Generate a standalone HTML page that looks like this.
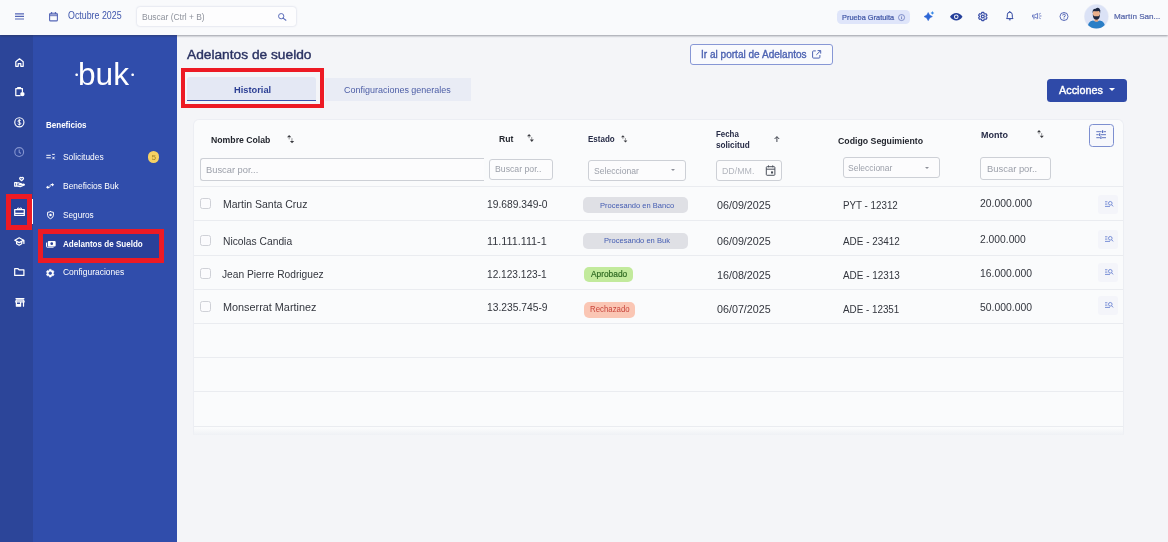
<!DOCTYPE html>
<html lang="es">
<head>
<meta charset="utf-8">
<title>Adelantos de sueldo</title>
<style>
*{box-sizing:border-box;margin:0;padding:0}
html,body{width:1168px;height:542px;overflow:hidden}
body{position:relative;background:#f4f5f8;font-family:"Liberation Sans","DejaVu Sans",sans-serif}
#app{position:absolute;left:0;top:0;width:1168px;height:542px;overflow:hidden;will-change:transform}
.a{position:absolute}
.t{position:absolute;white-space:nowrap;line-height:1;transform-origin:0 0}
.red{position:absolute;border:5px solid #ed1a24}
svg{position:absolute;overflow:visible}
</style>
</head>
<body>
<div id="app">
<div class="t" style="left:187.40px;top:48px;font-size:13.40px;color:#2a3262;transform:scaleX(1.0256);-webkit-text-stroke:.4px #2a3262">Adelantos de sueldo</div>
<div class="a" style="left:187.00px;top:77.30px;width:129.00px;height:23.40px;background:#e4e8f4;border-radius:3px 3px 0 0"></div>
<div class="a" style="left:187.00px;top:99.50px;width:129.00px;height:1.20px;background:#3a53ab"></div>
<div class="t" style="left:234.00px;top:85px;font-size:9.60px;font-weight:bold;color:#2c3f94;transform:scaleX(0.9677);">Historial</div>
<div class="a" style="left:324.70px;top:78.00px;width:146.00px;height:22.70px;background:#e9ecf5"></div>
<div class="t" style="left:343.60px;top:85px;font-size:9.60px;color:#4d5ea6;transform:scaleX(0.9358);">Configuraciones generales</div>
<div class="red" style="left:181px;top:68.300px;width:143px;height:39.400px;border-width:4.700px"></div>
<div class="a" style="left:690.20px;top:44.30px;width:142.80px;height:20.40px;border:1px solid #8797d5;border-radius:3px;background:#f9fafd"></div>
<div class="t" style="left:700.80px;top:50px;font-size:10.00px;color:#4d63b2;transform:scaleX(1.0055);-webkit-text-stroke:.35px #4d63b2">Ir al portal de Adelantos</div>
<svg style="left:811.60px;top:50.30px" width="9.30" height="8.70" viewBox="0 0 9.300 8.700" ><path d="M3.800 .9H1.500Q.6 .9 .6 1.800V7.200Q.6 8.100 1.500 8.100H7Q7.900 8.100 7.900 7.200V5" fill="none" stroke="#4d63b2" stroke-width="1"/><path d="M5.600 .6H8.700V3.600M8.500 .8L4.300 4.900" fill="none" stroke="#4d63b2" stroke-width="1"/></svg>
<div class="a" style="left:1046.60px;top:78.80px;width:80.20px;height:22.90px;background:#2f4aa8;border-radius:3.500px"></div>
<div class="t" style="left:1058.60px;top:85px;font-size:11.00px;color:#fff;transform:scaleX(0.9837);-webkit-text-stroke:.4px #fff">Acciones</div>
<div class="a" style="left:1109.30px;top:88.20px;width:0;height:0;border-left:3.10px solid transparent;border-right:3.10px solid transparent;border-top:3.40px solid #fff"></div>
<div class="a" style="left:193.30px;top:118.60px;width:931.20px;height:316.40px;background:#fafbfc;border:1px solid #eceef3;border-bottom:none;border-radius:6px 6px 0 0"></div>
<div class="a" style="left:193.30px;top:428.00px;width:931.20px;height:7.00px;background:linear-gradient(rgba(240,242,246,0),#eff1f5)"></div>
<div class="t" style="left:210.70px;top:136px;font-size:9.20px;font-weight:bold;color:#23262e;transform:scaleX(0.9466);">Nombre Colab</div>
<svg style="left:287.10px;top:135.10px" width="7.20" height="8.30" viewBox="0 0 7.2 8.3" ><path d="M0 2.300L2.150 0L4.300 2.300Z" fill="#3a3b40"/><path d="M2.150 2.200V4.400M4.950 3.200V6" stroke="#3a3b40" stroke-width=".9" opacity=".6"/><path d="M2.900 5.900H7.200L5.050 8.300Z" fill="#3a3b40"/></svg>
<div class="t" style="left:498.60px;top:135px;font-size:9.20px;font-weight:bold;color:#23262e;transform:scaleX(0.9379);">Rut</div>
<svg style="left:527.10px;top:133.70px" width="6.90" height="7.90" viewBox="0 0 7.2 8.3" ><path d="M0 2.300L2.150 0L4.300 2.300Z" fill="#3a3b40"/><path d="M2.150 2.200V4.400M4.950 3.200V6" stroke="#3a3b40" stroke-width=".9" opacity=".6"/><path d="M2.900 5.900H7.200L5.050 8.300Z" fill="#3a3b40"/></svg>
<div class="t" style="left:588.20px;top:135px;font-size:9.00px;font-weight:bold;color:#272c47;transform:scaleX(0.8883);">Estado</div>
<svg style="left:620.60px;top:134.50px" width="6.40" height="7.70" viewBox="0 0 7.2 8.3" ><path d="M0 2.300L2.150 0L4.300 2.300Z" fill="#3a3b40"/><path d="M2.150 2.200V4.400M4.950 3.200V6" stroke="#3a3b40" stroke-width=".9" opacity=".6"/><path d="M2.900 5.900H7.200L5.050 8.300Z" fill="#3a3b40"/></svg>
<div class="t" style="left:716.00px;top:130px;font-size:8.60px;font-weight:bold;color:#272c47;transform:scaleX(0.9179);">Fecha</div>
<div class="t" style="left:716.00px;top:141px;font-size:8.60px;font-weight:bold;color:#272c47;transform:scaleX(0.9520);">solicitud</div>
<svg style="left:773.90px;top:135.50px" width="5.80" height="6.20" viewBox="0 0 5.800 6.200" ><path d="M2.900 6V.8M.6 3L2.900 .6L5.200 3" stroke="#2b2f3a" stroke-width=".9" fill="none"/></svg>
<div class="t" style="left:838.00px;top:136px;font-size:9.40px;font-weight:bold;color:#23262e;transform:scaleX(0.9331);">Codigo Seguimiento</div>
<div class="t" style="left:980.80px;top:131px;font-size:9.20px;font-weight:bold;color:#272c47;transform:scaleX(0.9772);">Monto</div>
<svg style="left:1036.90px;top:129.80px" width="6.80" height="8.00" viewBox="0 0 7.2 8.3" ><path d="M0 2.300L2.150 0L4.300 2.300Z" fill="#3a3b40"/><path d="M2.150 2.200V4.400M4.950 3.200V6" stroke="#3a3b40" stroke-width=".9" opacity=".6"/><path d="M2.900 5.900H7.200L5.050 8.300Z" fill="#3a3b40"/></svg>
<div class="a" style="left:1089.20px;top:124.20px;width:24.50px;height:22.40px;border:1px solid #7d8fd0;border-radius:3.500px;background:#f7f8fc"></div>
<svg style="left:1096.40px;top:130.30px" width="10.30" height="9.40" viewBox="0 0 10.300 9.400" ><path d="M.3 1.700H5.600M7.600 1.700H10M.3 4.700H2.700M4.700 4.700H10M.3 7.700H3.900M5.900 7.700H10" stroke="#4f67ba" stroke-width=".9"/><path d="M6.600 .3V3.100M3.700 3.300V6.100M4.900 6.300V9.100" stroke="#4f67ba" stroke-width="1.100"/></svg>
<div class="a" style="left:199.90px;top:158.00px;width:284.10px;height:22.70px;border:1px solid #cdd0d6;border-radius:3px;background:#fcfcfd;border-right:none;border-radius:3px 0 0 3px"></div>
<div class="t" style="left:205.80px;top:165px;font-size:9.80px;color:#9b9fa9;transform:scaleX(0.9507);">Buscar por...</div>
<div class="a" style="left:488.70px;top:159.20px;width:64.10px;height:20.50px;border:1px solid #cdd0d6;border-radius:3px;background:#fcfcfd"></div>
<div class="t" style="left:494.60px;top:165px;font-size:9.30px;color:#9b9fa9;transform:scaleX(0.9363);">Buscar por..</div>
<div class="a" style="left:588.20px;top:159.80px;width:97.50px;height:20.90px;border:1px solid #cdd0d6;border-radius:3px;background:#fcfcfd"></div>
<div class="t" style="left:593.70px;top:167px;font-size:9.30px;color:#9b9fa9;transform:scaleX(0.9220);">Seleccionar</div>
<div class="a" style="left:671.30px;top:169.10px;width:0;height:0;border-left:2.70px solid transparent;border-right:2.70px solid transparent;border-top:2.60px solid #8d9099"></div>
<div class="a" style="left:716.00px;top:160.20px;width:65.80px;height:20.90px;border:1px solid #cdd0d6;border-radius:3px;background:#fcfcfd"></div>
<div class="t" style="left:721.60px;top:167px;font-size:9.30px;color:#b2b5bd;transform:scaleX(0.9493);">DD/MM.</div>
<svg style="left:765.20px;top:165.10px" width="11.20" height="11.10" viewBox="0 0 11.200 11.100" ><rect x="1.300" y="1.700" width="8.600" height="8.600" rx=".8" fill="none" stroke="#4a4f5a" stroke-width="1"/><path d="M1.300 4.200H9.900M3.500 .4V2.300M7.700 .4V2.300" stroke="#4a4f5a" stroke-width="1"/><rect x="6" y="6.400" width="2.100" height="2.100" fill="#4a4f5a"/></svg>
<div class="a" style="left:842.50px;top:157.30px;width:97.30px;height:20.70px;border:1px solid #cdd0d6;border-radius:3px;background:#fcfcfd"></div>
<div class="t" style="left:847.60px;top:164px;font-size:9.30px;color:#9b9fa9;transform:scaleX(0.9138);">Seleccionar</div>
<div class="a" style="left:925.20px;top:166.80px;width:0;height:0;border-left:2.30px solid transparent;border-right:2.30px solid transparent;border-top:2.40px solid #8d9099"></div>
<div class="a" style="left:980.10px;top:156.90px;width:70.70px;height:22.80px;border:1px solid #cdd0d6;border-radius:3px;background:#fcfcfd"></div>
<div class="t" style="left:986.70px;top:164px;font-size:9.80px;color:#9b9fa9;transform:scaleX(0.9602);">Buscar por..</div>
<div class="a" style="left:194.30px;top:186.00px;width:929.20px;height:1.10px;background:#eaecf0"></div>
<div class="a" style="left:194.30px;top:219.60px;width:929.20px;height:1.10px;background:#eaecf0"></div>
<div class="a" style="left:194.30px;top:254.70px;width:929.20px;height:1.10px;background:#eaecf0"></div>
<div class="a" style="left:194.30px;top:288.80px;width:929.20px;height:1.10px;background:#eaecf0"></div>
<div class="a" style="left:194.30px;top:322.70px;width:929.20px;height:1.10px;background:#eaecf0"></div>
<div class="a" style="left:194.30px;top:357.10px;width:929.20px;height:1.10px;background:#eaecf0"></div>
<div class="a" style="left:194.30px;top:391.40px;width:929.20px;height:1.10px;background:#eaecf0"></div>
<div class="a" style="left:194.30px;top:425.50px;width:929.20px;height:1.10px;background:#eaecf0"></div>
<div class="a" style="left:200.20px;top:198.00px;width:10.90px;height:10.80px;border:1px solid #cfd1d7;border-radius:2.500px;background:#fbfbfd"></div>
<div class="t" style="left:222.80px;top:199px;font-size:11.40px;color:#33363e;transform:scaleX(0.9197);">Martin Santa Cruz</div>
<div class="t" style="left:487.30px;top:199px;font-size:11.40px;color:#33363e;transform:scaleX(0.9012);">19.689.349-0</div>
<div class="t" style="left:716.80px;top:200px;font-size:11.40px;color:#33363e;transform:scaleX(0.9422);">06/09/2025</div>
<div class="t" style="left:842.80px;top:200px;font-size:11.40px;color:#33363e;transform:scaleX(0.8599);">PYT - 12312</div>
<div class="t" style="left:979.50px;top:198px;font-size:11.40px;color:#33363e;transform:scaleX(0.9122);">20.000.000</div>
<div class="a" style="left:1098.30px;top:194.90px;width:19.40px;height:19.20px;background:#f4f5fa;border-radius:3px"></div><svg style="left:1105.00px;top:201.30px" width="8.40" height="6.40" viewBox="0 0 8.400 6.400" ><path d="M0 .8H2.400M0 3.100H2.400M0 5.400H5" stroke="#6c84d2" stroke-width=".9"/><circle cx="5.300" cy="2.300" r="1.800" fill="none" stroke="#6c84d2" stroke-width=".9"/><path d="M6.600 3.700L8.100 5.400" stroke="#6c84d2" stroke-width=".95"/></svg>
<div class="a" style="left:200.20px;top:235.00px;width:10.90px;height:10.80px;border:1px solid #cfd1d7;border-radius:2.500px;background:#fbfbfd"></div>
<div class="t" style="left:222.80px;top:236px;font-size:11.40px;color:#33363e;transform:scaleX(0.9020);">Nicolas Candia</div>
<div class="t" style="left:487.30px;top:236px;font-size:11.40px;color:#33363e;transform:scaleX(0.9493);">11.111.111-1</div>
<div class="t" style="left:716.80px;top:236px;font-size:11.40px;color:#33363e;transform:scaleX(0.9422);">06/09/2025</div>
<div class="t" style="left:842.80px;top:236px;font-size:11.40px;color:#33363e;transform:scaleX(0.8708);">ADE - 23412</div>
<div class="t" style="left:979.50px;top:234px;font-size:11.40px;color:#33363e;transform:scaleX(0.9039);">2.000.000</div>
<div class="a" style="left:1098.30px;top:229.70px;width:19.40px;height:19.20px;background:#f4f5fa;border-radius:3px"></div><svg style="left:1105.00px;top:236.10px" width="8.40" height="6.40" viewBox="0 0 8.400 6.400" ><path d="M0 .8H2.400M0 3.100H2.400M0 5.400H5" stroke="#6c84d2" stroke-width=".9"/><circle cx="5.300" cy="2.300" r="1.800" fill="none" stroke="#6c84d2" stroke-width=".9"/><path d="M6.600 3.700L8.100 5.400" stroke="#6c84d2" stroke-width=".95"/></svg>
<div class="a" style="left:200.20px;top:268.00px;width:10.90px;height:10.80px;border:1px solid #cfd1d7;border-radius:2.500px;background:#fbfbfd"></div>
<div class="t" style="left:222.30px;top:269px;font-size:11.40px;color:#33363e;transform:scaleX(0.8976);">Jean Pierre Rodriguez</div>
<div class="t" style="left:487.30px;top:269px;font-size:11.40px;color:#33363e;transform:scaleX(0.8892);">12.123.123-1</div>
<div class="t" style="left:716.80px;top:270px;font-size:11.40px;color:#33363e;transform:scaleX(0.9422);">16/08/2025</div>
<div class="t" style="left:842.80px;top:270px;font-size:11.40px;color:#33363e;transform:scaleX(0.8708);">ADE - 12313</div>
<div class="t" style="left:979.50px;top:268px;font-size:11.40px;color:#33363e;transform:scaleX(0.9122);">16.000.000</div>
<div class="a" style="left:1098.30px;top:262.70px;width:19.40px;height:19.20px;background:#f4f5fa;border-radius:3px"></div><svg style="left:1105.00px;top:269.10px" width="8.40" height="6.40" viewBox="0 0 8.400 6.400" ><path d="M0 .8H2.400M0 3.100H2.400M0 5.400H5" stroke="#6c84d2" stroke-width=".9"/><circle cx="5.300" cy="2.300" r="1.800" fill="none" stroke="#6c84d2" stroke-width=".9"/><path d="M6.600 3.700L8.100 5.400" stroke="#6c84d2" stroke-width=".95"/></svg>
<div class="a" style="left:200.20px;top:301.00px;width:10.90px;height:10.80px;border:1px solid #cfd1d7;border-radius:2.500px;background:#fbfbfd"></div>
<div class="t" style="left:222.80px;top:302px;font-size:11.40px;color:#33363e;transform:scaleX(0.9520);">Monserrat Martinez</div>
<div class="t" style="left:487.30px;top:302px;font-size:11.40px;color:#33363e;transform:scaleX(0.9012);">13.235.745-9</div>
<div class="t" style="left:716.80px;top:304px;font-size:11.40px;color:#33363e;transform:scaleX(0.9422);">06/07/2025</div>
<div class="t" style="left:842.80px;top:304px;font-size:11.40px;color:#33363e;transform:scaleX(0.8631);">ADE - 12351</div>
<div class="t" style="left:979.50px;top:302px;font-size:11.40px;color:#33363e;transform:scaleX(0.9122);">50.000.000</div>
<div class="a" style="left:1098.30px;top:295.70px;width:19.40px;height:19.20px;background:#f4f5fa;border-radius:3px"></div><svg style="left:1105.00px;top:302.10px" width="8.40" height="6.40" viewBox="0 0 8.400 6.400" ><path d="M0 .8H2.400M0 3.100H2.400M0 5.400H5" stroke="#6c84d2" stroke-width=".9"/><circle cx="5.300" cy="2.300" r="1.800" fill="none" stroke="#6c84d2" stroke-width=".9"/><path d="M6.600 3.700L8.100 5.400" stroke="#6c84d2" stroke-width=".95"/></svg>
<div class="a" style="left:583.10px;top:197.10px;width:105.10px;height:15.50px;background:#dfe0e5;border-radius:5px"></div>
<div class="t" style="left:599.60px;top:202px;font-size:7.60px;color:#425bb2;transform:scaleX(0.9919);">Procesando en Banco</div>
<div class="a" style="left:583.10px;top:233.00px;width:105.10px;height:15.50px;background:#dfe0e5;border-radius:5px"></div>
<div class="t" style="left:603.50px;top:237px;font-size:7.60px;color:#425bb2;transform:scaleX(0.9943);">Procesando en Buk</div>
<div class="a" style="left:584.10px;top:266.60px;width:49.10px;height:15.40px;background:#c2ea9c;border-radius:5px"></div>
<div class="t" style="left:590.60px;top:270px;font-size:8.60px;color:#2f6a22;transform:scaleX(0.9709);-webkit-text-stroke:.2px #2f6a22">Aprobado</div>
<div class="a" style="left:583.60px;top:302.20px;width:51.60px;height:15.50px;background:#fac6b4;border-radius:5px"></div>
<div class="t" style="left:589.50px;top:306px;font-size:8.20px;color:#c9463c;transform:scaleX(0.9578);">Rechazado</div>
<div class="a" style="left:0.00px;top:34.00px;width:32.50px;height:508.00px;background:#2c4599"></div>
<div class="a" style="left:32.50px;top:34.00px;width:144.80px;height:508.00px;background:#304dab"></div>
<div class="a" style="left:11.00px;top:198.80px;width:16.20px;height:25.80px;background:#293f97"></div>
<div class="a" style="left:43.00px;top:234.00px;width:116.20px;height:24.00px;background:#2a4199"></div>
<div class="a" style="left:32.10px;top:199.30px;width:0.90px;height:24.70px;background:#fff"></div>
<svg style="left:15.00px;top:57.80px" width="9.00" height="9.00" viewBox="0 0 9 9" ><path d="M.8 8.300V3.700L4.500 .8L8.200 3.700V8.300H5.800V5.500H3.200V8.300Z" stroke="#fff" fill="none" stroke-width="1.25" stroke-linejoin="round" stroke-linecap="round"/></svg><svg style="left:15.00px;top:87.00px" width="10.00" height="9.70" viewBox="0 0 10 9.700" ><path d="M5.200 8.600H.8V1.600H7.400V4.500M2.700 1.600V.6H5.500V1.600" stroke="#fff" fill="none" stroke-width="1.25" stroke-linejoin="round" stroke-linecap="round"/><circle cx="7.400" cy="7.100" r="2.200" fill="#fff"/></svg><svg style="left:14.20px;top:116.70px" width="10.70" height="10.70" viewBox="0 0 10.700 10.700" ><circle cx="5.350" cy="5.350" r="4.600" fill="none" stroke="#fff" stroke-width="1.15"/><path d="M6.800 3.900Q6.400 3.100 5.300 3.100Q4 3.200 4 4.200Q4 5 5.350 5.350Q6.800 5.700 6.800 6.600Q6.700 7.600 5.350 7.600Q4.200 7.600 3.800 6.700M5.350 2.200V8.500" fill="none" stroke="#fff" stroke-width=".95"/></svg><svg style="left:14.20px;top:147.20px" width="10.40" height="10.10" viewBox="0 0 10.400 10.100" ><circle cx="5.200" cy="5.050" r="4.400" fill="none" stroke="#8494cf" stroke-width="1.1"/><path d="M5.200 2.500V5.200L6.900 6.500" fill="none" stroke="#8494cf" stroke-width="1.1"/></svg><svg style="left:13.80px;top:177.10px" width="11.10" height="10.40" viewBox="0 0 11.100 10.400" ><path d="M7.600 3.700L5.700 1.900A1.150 1.150 0 0 1 7.600 .8A1.150 1.150 0 0 1 9.500 1.900Z" stroke="#fff" fill="none" stroke-width="1.25" stroke-linejoin="round" stroke-linecap="round"/><path d="M.7 5.600H2.700V9.200H.7ZM2.700 6H5L7.300 6.800Q7.600 7.600 6.700 7.700H5M6.900 7.700L9.600 7.200Q10.500 7.300 10.300 8L6.300 9.600L2.700 8.800" stroke="#fff" fill="none" stroke-width="1.25" stroke-linejoin="round" stroke-linecap="round"/></svg><svg style="left:13.90px;top:207.10px" width="11.00" height="9.20" viewBox="0 0 11 9.200" ><path d="M.7 2.600H10.300V8.500H.7ZM1 6.300H10" stroke="#fff" fill="none" stroke-width="1.25" stroke-linejoin="round" stroke-linecap="round"/><path d="M3.500 2.400Q3.300 .5 4.600 .9L5.500 2.200L6.400 .9Q7.700 .5 7.500 2.400" stroke="#fff" fill="none" stroke-width="1"/></svg><svg style="left:14.20px;top:237.30px" width="10.90" height="8.90" viewBox="0 0 10.900 8.900" ><path d="M.8 3.200L5.200 .8L9.600 3.200L5.200 5.600ZM2.600 4.500V6.800L5.200 8.200L7.800 6.800V4.500M9.900 3.300V6.400" stroke="#fff" fill="none" stroke-width="1.25" stroke-linejoin="round" stroke-linecap="round"/></svg><svg style="left:14.20px;top:268.20px" width="10.60" height="8.10" viewBox="0 0 10.600 8.100" ><path d="M.7 .7H4L5.100 1.800H9.900V7.400H.7Z" stroke="#fff" fill="none" stroke-width="1.25" stroke-linejoin="round" stroke-linecap="round"/></svg><svg style="left:14.50px;top:297.50px" width="9.90" height="8.90" viewBox="0 0 9.900 8.900" ><path d="M1 .7H8.900M.7 3.900L1.300 2.100H8.600L9.200 3.900ZM1.400 4V8.200H5.600V4M8.500 4V8.200" stroke="#fff" fill="none" stroke-width="1.25" stroke-linejoin="round" stroke-linecap="round"/><path d="M1.400 6H5.600V8.200H1.400Z" fill="#fff"/></svg>
<div class="t" style="left:78.41px;top:59px;font-size:31.70px;color:#fff;transform:scaleX(0.9970);">buk</div>
<div class="t" style="left:74.50px;top:71px;font-size:9.00px;color:#fff;transform:scaleX(1.0667);">•</div>
<div class="t" style="left:131.30px;top:71px;font-size:9.00px;color:#fff;transform:scaleX(1.0667);">•</div>
<div class="t" style="left:45.50px;top:121px;font-size:9.20px;font-weight:bold;color:#fff;transform:scaleX(0.8716);">Beneficios</div>
<svg style="left:45.50px;top:154.40px" width="9.00" height="5.60" viewBox="0 0 9 5.600" ><path d="M.3 1.300H4.800M.3 3.800H4.800" stroke="#fff" stroke-width="1"/><path d="M6.200 .4H8.800M6.300 2.700L8.600 5.300M8.600 2.700L6.300 5.300" stroke="#fff" stroke-width=".95"/></svg><svg style="left:46.00px;top:183.00px" width="8.20" height="6.00" viewBox="0 0 8.200 6" ><path d="M0 4.300L2.200 2.500V3.700H3.600V4.900H2.200V6.100Z" fill="#fff"/><path d="M8.200 1.700L6 -.1V1.100H4.600V2.300H6V3.500Z" fill="#fff"/><circle cx="4.100" cy="3" r=".7" fill="#fff"/></svg><svg style="left:46.70px;top:211.00px" width="7.00" height="8.30" viewBox="0 0 7 8.300" ><path d="M3.500 .6Q5 1.300 6.400 1.300V4.300Q6.300 6.700 3.500 7.700Q.7 6.700 .6 4.300V1.300Q2 1.300 3.500 .6Z" stroke="#fff" fill="none" stroke-width="1" stroke-linejoin="round" stroke-linecap="round"/><circle cx="3.500" cy="3.900" r="1.250" fill="#fff"/></svg><svg style="left:45.50px;top:241.20px" width="9.70" height="6.60" viewBox="0 0 9.700 6.600" ><rect x="1.800" y="0" width="7.900" height="5.400" rx="1" fill="#fff"/><path d="M.5 1.600V5.600Q.5 6.200 1.100 6.200H7.600" stroke="#fff" stroke-width="1" fill="none"/><circle cx="5.750" cy="2.700" r="1.350" fill="#2a4199"/></svg><svg style="left:45.80px;top:268.80px" width="8.50" height="8.40" viewBox="1 1 22 22" preserveAspectRatio="none"><path d="M19.430 12.980c.04-.32.070-.64.070-.98s-.03-.66-.07-.98l2.110-1.650c.19-.15.240-.42.120-.64l-2-3.460c-.12-.22-.39-.3-.61-.22l-2.490 1c-.52-.4-1.080-.73-1.690-.98l-.38-2.650C14.460 2.180 14.250 2 14 2h-4c-.25 0-.46.180-.49.420l-.38 2.650c-.61.250-1.170.59-1.690.98l-2.490-1c-.23-.09-.49 0-.61.220l-2 3.460c-.13.220-.07.490.12.640l2.110 1.650c-.4.320-.7.650-.7.980s.3.660.7.980l-2.110 1.650c-.19.150-.24.420-.12.640l2 3.460c.12.220.39.300.61.220l2.490-1c.52.400 1.080.73 1.690.98l.38 2.650c.3.240.24.420.49.420h4c.25 0 .46-.18.490-.42l.38-2.650c.61-.25 1.170-.59 1.690-.98l2.490 1c.23.090.49 0 .61-.22l2-3.460c.12-.22.070-.49-.12-.64l-2.110-1.650z" fill="#fff" stroke="#fff" stroke-width="1.76" stroke-linejoin="round"/><circle cx="12" cy="12" r="3.400" fill="#304dab" stroke="#304dab" stroke-width="1.76"/></svg>
<div class="t" style="left:62.70px;top:153px;font-size:9.30px;color:#fff;transform:scaleX(0.9049);">Solicitudes</div>
<div class="a" style="left:147.90px;top:151.00px;width:11.50px;height:11.60px;background:#f7d264;border-radius:50%"></div>
<div class="t" style="left:151.70px;top:154px;font-size:7.60px;color:#a08020;transform:scaleX(1.0000);">5</div>
<div class="t" style="left:62.70px;top:182px;font-size:9.20px;color:#fff;transform:scaleX(0.9186);">Beneficios Buk</div>
<div class="t" style="left:62.70px;top:211px;font-size:9.20px;color:#fff;transform:scaleX(0.8982);">Seguros</div>
<div class="t" style="left:62.50px;top:240px;font-size:9.20px;font-weight:bold;color:#fff;transform:scaleX(0.8778);">Adelantos de Sueldo</div>
<div class="t" style="left:62.70px;top:268px;font-size:9.20px;color:#fff;transform:scaleX(0.9207);">Configuraciones</div>
<div class="red" style="left:38px;top:229px;width:126px;height:33.600px;border-width:5px"></div>
<div class="red" style="left:6.100px;top:193.900px;width:26px;height:35.800px;border-width:5px"></div>
<div class="a" style="left:0.00px;top:0.00px;width:1168.00px;height:34.50px;background:#f9fafc;box-shadow:0 .5px 2px rgba(40,45,60,.45)"></div>
<div class="a" style="left:136.80px;top:6.80px;width:159.00px;height:18.80px;background:#fdfdfe;border-radius:3px;box-shadow:0 0 2px rgba(120,130,170,.4)"></div>
<div class="a" style="left:836.800px;top:10.200px;width:73.400px;height:14.200px;background:#dfe5fa;border-radius:4.500px"></div>
<svg style="left:15.00px;top:13.00px" width="9.00" height="7.00" viewBox="0 0 9 7" ><path d="M0 .8H9M0 3.4H9M0 6H9" stroke="#5566b6" stroke-width="1.15"/></svg><svg style="left:49.00px;top:11.50px" width="9.00" height="9.50" viewBox="0 0 9 9.5" ><rect x=".6" y="1.3" width="7.8" height="7.6" rx="1" fill="none" stroke="#5566b6" stroke-width="1.1"/><path d="M.6 2.2h7.8v2H.6z" fill="#5566b6" opacity=".75"/><path d="M2.6 0v2M6.400 0v2" stroke="#5566b6" stroke-width="1.1"/></svg><svg style="left:278.40px;top:12.80px" width="8.40" height="7.60" viewBox="0 0 8.4 7.6" ><circle cx="3.2" cy="3.200" r="2.650" fill="none" stroke="#5a6cb9" stroke-width="1"/><path d="M5.100 5.100L7.900 7.200" stroke="#5a6cb9" stroke-width="1.15" stroke-linecap="round"/></svg><svg style="left:897.50px;top:14.10px" width="7.10" height="7.10" viewBox="0 0 7 7" ><circle cx="3.500" cy="3.500" r="3" fill="none" stroke="#5c6db5" stroke-width=".7"/><path d="M3.500 3.100v2M3.500 1.800v.7" stroke="#5c6db5" stroke-width=".8"/></svg><svg style="left:924.00px;top:11.30px" width="10.40" height="9.70" viewBox="0 0 10.4 9.7" ><path d="M4.200 1.500Q5.100 4.800 8.400 5.600Q5.100 6.500 4.200 9.700Q3.300 6.500 0 5.600Q3.300 4.800 4.200 1.500Z" fill="#2c66d6" stroke="#2c66d6" stroke-width=".5" stroke-linejoin="round"/><path d="M8.400 0Q8.700 1.600 10.300 1.900Q8.700 2.200 8.400 3.800Q8.100 2.200 6.500 1.900Q8.100 1.600 8.400 0Z" fill="#3a8be8"/></svg><svg style="left:949.80px;top:12.80px" width="12.50" height="7.50" viewBox="0 0 12.5 7.5" ><path d="M0 3.750Q2.600 0 6.250 0Q9.900 0 12.500 3.750Q9.900 7.500 6.250 7.500Q2.600 7.500 0 3.750Z" fill="#253f9a"/><circle cx="6.250" cy="3.750" r="2.300" fill="#f9fafc"/><circle cx="6.250" cy="3.750" r="1.300" fill="#253f9a"/></svg><svg style="left:978.40px;top:12.00px" width="9.60" height="9.00" viewBox="1 1 22 22" preserveAspectRatio="none"><path d="M19.430 12.980c.04-.32.070-.64.070-.98s-.03-.66-.07-.98l2.110-1.650c.19-.15.240-.42.120-.64l-2-3.460c-.12-.22-.39-.3-.61-.22l-2.490 1c-.52-.4-1.080-.73-1.690-.98l-.38-2.650C14.460 2.180 14.250 2 14 2h-4c-.25 0-.46.180-.49.420l-.38 2.650c-.61.250-1.170.59-1.690.98l-2.490-1c-.23-.09-.49 0-.61.220l-2 3.460c-.13.220-.07.490.12.640l2.110 1.650c-.4.320-.7.650-.7.980s.3.660.7.980l-2.110 1.650c-.19.150-.24.420-.12.640l2 3.460c.12.220.39.300.61.220l2.490-1c.52.400 1.080.73 1.690.98l.38 2.650c.3.240.24.420.49.420h4c.25 0 .46-.18.490-.42l.38-2.650c.61-.25 1.170-.59 1.690-.98l2.490 1c.23.090.49 0 .61-.22l2-3.460c.12-.22.070-.49-.12-.64l-2.110-1.650z" fill="none" stroke="#3a4fa8" stroke-width="2.75" stroke-linejoin="round"/><circle cx="12" cy="12" r="3.400" fill="none" stroke="#3a4fa8" stroke-width="2.75"/></svg><svg style="left:1006.30px;top:11.30px" width="7.60" height="9.70" viewBox="0 0 7.6 9.7" ><path d="M.6 7.600V7L1.300 6.300V3.800A2.500 2.600 0 0 1 6.300 3.800V6.300L7 7V7.600Z" fill="none" stroke="#3046a2" stroke-width="1" stroke-linejoin="round"/><path d="M3.800 0V1.200M2.900 8.800H4.700" stroke="#3046a2" stroke-width="1"/></svg><svg style="left:1031.50px;top:13.30px" width="10.20" height="6.70" viewBox="0 0 10.2 6.700" ><path d="M.5 2.100H2.800L5.600 .4V5.600L2.800 4H.5Z" fill="none" stroke="#6878c2" stroke-width=".95" stroke-linejoin="round"/><path d="M1.900 4.200V6.400" stroke="#6878c2" stroke-width="1"/><path d="M7.300 3H9.500M7 1.300L8.700 .3M7 4.700L8.700 5.700" stroke="#6878c2" stroke-width=".9"/></svg><svg style="left:1059.00px;top:12.00px" width="10.00" height="9.00" viewBox="0 0 10 9" ><circle cx="5" cy="4.500" r="4" fill="none" stroke="#4a5cb0" stroke-width=".9"/><path d="M3.700 3.500A1.300 1.300 0 1 1 5 4.700V5.500" fill="none" stroke="#4a5cb0" stroke-width=".9"/><circle cx="5" cy="6.800" r=".55" fill="#4a5cb0"/></svg><svg style="left:1084.00px;top:4.30px" width="24.80" height="24.80" viewBox="0 0 24.800 24.800" ><defs><clipPath id="av"><circle cx="12.400" cy="12.400" r="12"/></clipPath></defs><circle cx="12.400" cy="12.400" r="12.400" fill="#e9ecf6"/><circle cx="12.400" cy="12.400" r="11.700" fill="#dbe2f6"/><g clip-path="url(#av)"><path d="M3.500 25Q3.500 17.200 9 16.600L12.400 17.600L15.800 16.600Q21.300 17.200 21.300 25Z" fill="#2a7ec6"/><rect x="10.600" y="13" width="3.600" height="4.600" fill="#e0a07c"/><ellipse cx="12.400" cy="9.600" rx="3.500" ry="4.200" fill="#eab08c"/><path d="M8.800 10Q8.600 15.600 12.400 15.800Q16.200 15.600 16 10Q15.600 12 14.400 12.200H10.400Q9.200 12 8.800 10Z" fill="#1c2740"/><path d="M8.700 9.400Q7.900 4.600 11.600 4.700Q13.800 2.800 15.400 4.600Q16.900 5.800 16.100 9.400Q15.700 7.300 14.800 6.900Q12 7.600 9.700 6.900Q8.900 7.600 8.700 9.400Z" fill="#1c2740"/></g></svg>
<div class="t" style="left:67.50px;top:11px;font-size:10.30px;color:#3f56ac;transform:scaleX(0.8585);">Octubre 2025</div>
<div class="t" style="left:142.00px;top:13px;font-size:9.20px;color:#8e929c;transform:scaleX(0.9193);">Buscar (Ctrl + B)</div>
<div class="t" style="left:842.00px;top:14px;font-size:7.70px;color:#3f55a5;transform:scaleX(0.9601);-webkit-text-stroke:.2px #3f55a5">Prueba Gratuita</div>
<div class="t" style="left:1113.80px;top:13px;font-size:7.80px;color:#5564a8;transform:scaleX(1.0390);-webkit-text-stroke:.2px #5564a8">Martín San...</div>
</div>
</body>
</html>
